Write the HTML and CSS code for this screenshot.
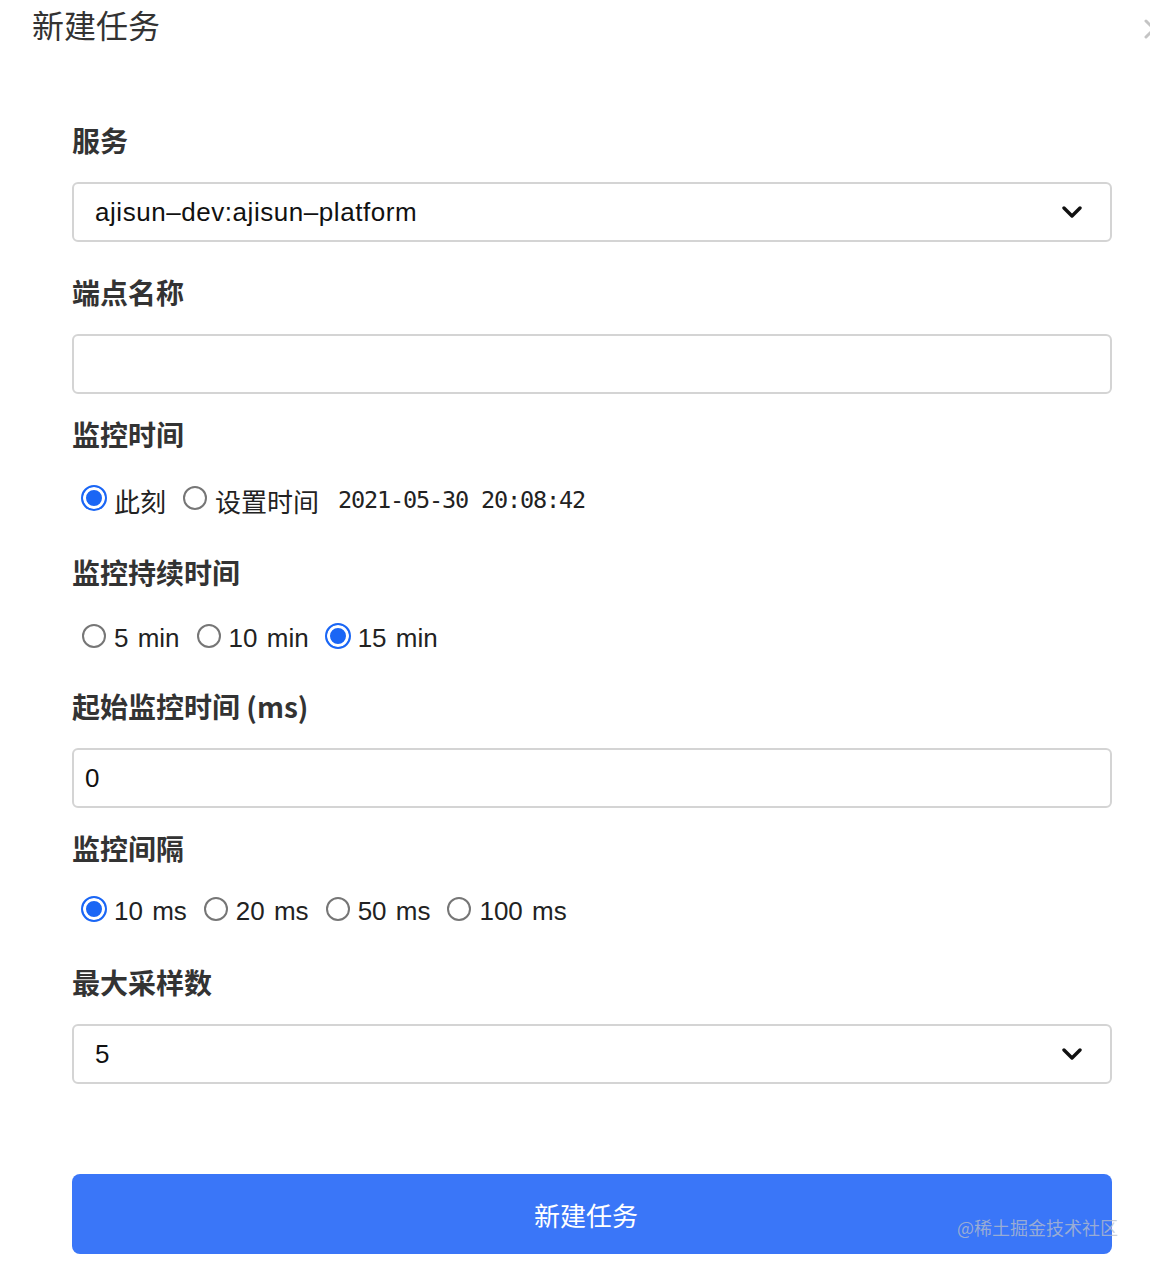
FILE: index.html
```html
<!DOCTYPE html>
<html lang="zh-CN">
<head>
<meta charset="utf-8">
<title>新建任务</title>
<link rel="stylesheet" href="styles.css">
</head>
<body>
<div class="modal">
  <div class="header">
    <h2 class="title">新建任务</h2>
    <svg class="close" width="20" height="20" viewBox="0 0 20 20"><path d="M2 2 L18 18 M18 2 L2 18" fill="none" stroke="#c4c4c4" stroke-width="3" stroke-linecap="round"/></svg>
  </div>
  <form class="form">
    <div class="label">服务</div>
    <div class="box select">
      <span class="value wide">ajisun–dev:ajisun–platform</span>
      <svg class="chevron" width="20" height="14" viewBox="0 0 20 14"><polyline points="2,3 10,11 18,3" fill="none" stroke="#111" stroke-width="3.4" stroke-linecap="round" stroke-linejoin="round"/></svg>
    </div>

    <div class="label">端点名称</div>
    <div class="box input"></div>

    <div class="label">监控时间</div>
    <div class="radios first">
      <span class="item"><span class="radio checked"></span>此刻</span>
      <span class="item"><span class="radio"></span>设置时间</span>
      <span class="stamp">2021-05-30 20:08:42</span>
    </div>

    <div class="label">监控持续时间</div>
    <div class="radios">
      <span class="item"><span class="radio"></span>5 min</span>
      <span class="item"><span class="radio"></span>10 min</span>
      <span class="item"><span class="radio checked"></span>15 min</span>
    </div>

    <div class="label">起始监控时间 (ms)</div>
    <div class="box input"><span class="value">0</span></div>

    <div class="label">监控间隔</div>
    <div class="radios last">
      <span class="item"><span class="radio checked"></span>10 ms</span>
      <span class="item"><span class="radio"></span>20 ms</span>
      <span class="item"><span class="radio"></span>50 ms</span>
      <span class="item"><span class="radio"></span>100 ms</span>
    </div>

    <div class="label">最大采样数</div>
    <div class="box select">
      <span class="value">5</span>
      <svg class="chevron" width="20" height="14" viewBox="0 0 20 14"><polyline points="2,3 10,11 18,3" fill="none" stroke="#111" stroke-width="3.4" stroke-linecap="round" stroke-linejoin="round"/></svg>
    </div>

    <div class="submit">新建任务</div>
  </form>
  <span class="watermark">@稀土掘金技术社区</span>
</div>
</body>
</html>
```

FILE: styles.css
```css
* { box-sizing: border-box; }
html, body { margin: 0; padding: 0; background: #fff; }
body {
  font-family: "Liberation Sans", "Noto Sans CJK SC", sans-serif;
  color: #222;
  width: 1150px;
  height: 1270px;
  overflow: hidden;
}
.modal { position: relative; width: 1150px; height: 1270px; overflow: hidden; }
.header { height: 120px; padding-left: 32px; }
.title {
  margin: 0;
  padding-top: 4px;
  font-size: 32px;
  line-height: 40px;
  font-weight: 400;
  color: #333;
  font-family: "Noto Sans CJK SC", sans-serif;
}
.close {
  position: absolute;
  left: 1144px;
  top: 19px;
}
.form { padding-left: 72px; width: 1112px; }
.label {
  height: 40px;
  line-height: 40px;
  font-size: 28px;
  font-weight: 700;
  color: #333;
  margin-bottom: 22px;
  font-family: "Noto Sans CJK SC", sans-serif;
}
.box {
  height: 60px;
  border: 2px solid #d4d4d4;
  border-radius: 6px;
  display: flex;
  align-items: center;
}
.select { margin-bottom: 30px; padding: 0 28px 0 21px; justify-content: space-between; }
.input { margin-bottom: 20px; padding-left: 11px; }
.value { font-size: 26px; color: #111; }
.wide { letter-spacing: 0.55px; }
.radios {
  height: 48px;
  display: flex;
  align-items: center;
  gap: 7px;
  margin-bottom: 24px;
  font-size: 26px;
  word-spacing: 2px;
  color: #222;
}
.radios.first { margin-bottom: 28px; }
.radios.last { margin-top: -3px; margin-bottom: 27px; }
.item { display: flex; align-items: center; }
.radio {
  width: 24px;
  height: 24px;
  border-radius: 50%;
  border: 2px solid #767676;
  margin: -4px 8px 0 10px;
  background: #fff;
}
.radio.checked {
  border-color: #1a66f5;
  background: #1a66f5;
  box-shadow: inset 0 0 0 3px #fff;
  width: 26px;
  height: 26px;
  margin-left: 9px;
  margin-right: 7px;
}
.stamp {
  margin-left: 12px;
  font-family: "DejaVu Sans Mono", monospace;
  font-size: 23.5px;
  letter-spacing: -1.15px;
  word-spacing: 0;
  color: #222;
}
.submit {
  margin-top: 90px;
  height: 80px;
  border-radius: 8px;
  background: #3a76f8;
  color: #fff;
  font-size: 26px;
  display: flex;
  align-items: center;
  justify-content: center;
  padding-right: 12px;
  font-family: "Noto Sans CJK SC", sans-serif;
}
.watermark {
  position: absolute;
  left: 957px;
  top: 1214px;
  font-size: 18px;
  line-height: 26px;
  color: rgba(185, 190, 200, 0.75);
  font-family: "Noto Sans CJK SC", sans-serif;
}
```
